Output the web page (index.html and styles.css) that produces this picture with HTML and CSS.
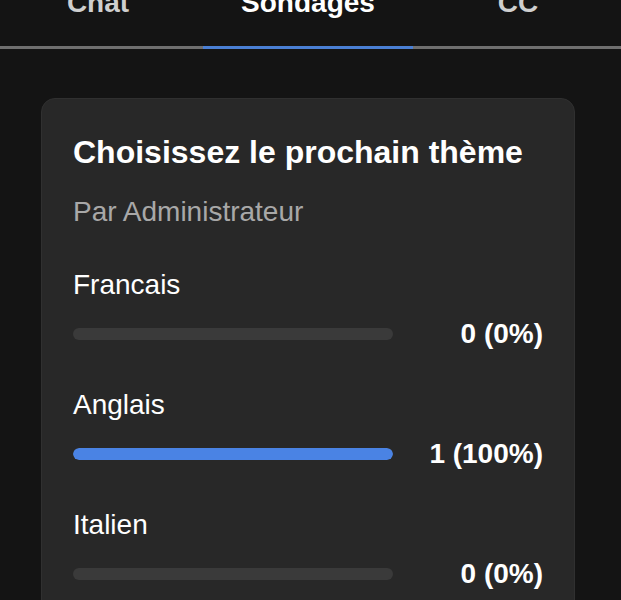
FILE: index.html
```html
<!DOCTYPE html>
<html lang="fr">
<head>
  <meta charset="UTF-8">
  <title>Sondages</title>
  <link rel="stylesheet" href="styles.css">
</head>
<body>
  <div class="app">
    <div class="tabs">
      <div class="tab">Chat</div>
      <div class="tab active">Sondages</div>
      <div class="tab">CC</div>
    </div>

    <div class="panel">
      <div class="poll">
        <h2 class="poll-title">Choisissez le prochain thème</h2>
        <div class="poll-author">Par Administrateur</div>

        <div class="option">
          <div class="option-label">Francais</div>
          <div class="option-row">
            <div class="bar"><div class="bar-fill" style="width: 0%"></div></div>
            <div class="count">0 (0%)</div>
          </div>
        </div>

        <div class="option">
          <div class="option-label">Anglais</div>
          <div class="option-row">
            <div class="bar"><div class="bar-fill" style="width: 100%"></div></div>
            <div class="count">1 (100%)</div>
          </div>
        </div>

        <div class="option">
          <div class="option-label">Italien</div>
          <div class="option-row">
            <div class="bar"><div class="bar-fill" style="width: 0%"></div></div>
            <div class="count">0 (0%)</div>
          </div>
        </div>
      </div>
    </div>
  </div>
</body>
</html>
```

FILE: styles.css
```css
body {
  margin: 0;
  background: #141414;
  overflow: hidden;
  font-family: "Liberation Sans", Arial, sans-serif;
  color: #fff;
}

.app {
  width: 630px;
  margin-left: -7px;
  margin-top: -13px;
}

.tabs {
  display: flex;
  border-bottom: 3px solid #6f6f6f;
}

.tab {
  flex: 1;
  text-align: center;
  font-size: 28px;
  font-weight: bold;
  line-height: 32px;
  padding-bottom: 27px;
  color: #cfcfcf;
  margin-bottom: -3px;
  border-bottom: 3px solid transparent;
}

.tab.active {
  color: #fff;
  border-bottom-color: #4a7fd4;
}

.panel {
  padding: 49px 48px 0;
}

.poll {
  background: #282828;
  border: 1px solid #303030;
  border-radius: 14px;
  padding: 35px 31px 40px;
}

.poll-title {
  margin: 0;
  font-size: 32px;
  line-height: 37px;
  font-weight: bold;
}

.poll-author {
  margin-top: 25px;
  font-size: 28px;
  line-height: 32px;
  color: #a8a8a8;
}

.option {
  margin-top: 39px;
}

.poll-author + .option {
  margin-top: 41px;
}

.option-label {
  font-size: 28px;
  line-height: 32px;
  margin-bottom: 17px;
}

.option-row {
  display: flex;
  align-items: center;
}

.bar {
  flex: 1;
  height: 12px;
  border-radius: 6px;
  background: #3a3a3a;
  overflow: hidden;
}

.bar-fill {
  height: 100%;
  border-radius: 6px;
  background: #4a83e4;
}

.count {
  width: 150px;
  text-align: right;
  font-size: 28px;
  line-height: 32px;
  font-weight: bold;
}
```
